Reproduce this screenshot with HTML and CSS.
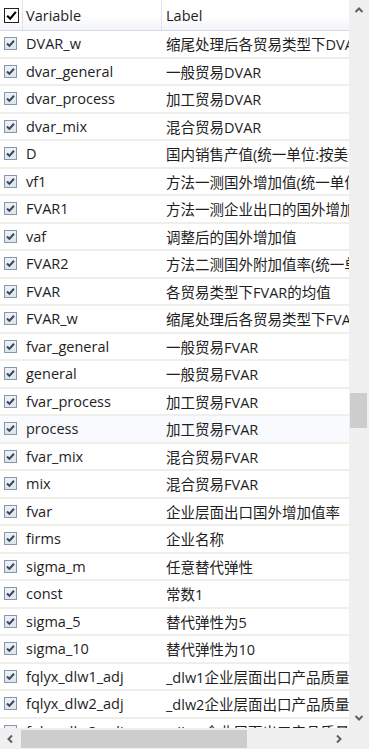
FILE: index.html
```html
<!DOCTYPE html>
<html lang="en">
<head>
  <meta charset="UTF-8" />
  <meta name="viewport" content="width=device-width, initial-scale=1.0"/>
  <title>Variables</title>
  <link rel="stylesheet" href="styles.css">
</head>
<body>

  <div class="frame">
    <div class="view">
      <div class="head">
        <div class="cell-check"><span class="box box-head"><svg viewBox="0 0 12 12"><path d="M2 6.2 L4.8 9 L10 2.6" fill="none" stroke="#000" stroke-width="2"/></svg></span></div>
        <div class="cell-var">Variable</div>
        <div class="cell-label">Label</div>
      </div>
      <div class="rows" id="rows"></div>
    </div>

    <div class="vscroll">
      <span class="arrow"><svg viewBox="0 0 10 10"><path d="M1.5 7 L5 3.5 L8.5 7" fill="none" stroke="#606060" stroke-width="2"/></svg></span>
      <div class="vtrack"><div class="vthumb"></div></div>
      <span class="arrow"><svg viewBox="0 0 10 10"><path d="M1.5 3 L5 6.5 L8.5 3" fill="none" stroke="#606060" stroke-width="2"/></svg></span>
    </div>

    <div class="hscroll">
      <span class="arrow"><svg viewBox="0 0 10 10"><path d="M7 1.5 L3.5 5 L7 8.5" fill="none" stroke="#606060" stroke-width="2"/></svg></span>
      <div class="htrack"><div class="hthumb"></div></div>
      <span class="arrow"><svg viewBox="0 0 10 10"><path d="M3 1.5 L6.5 5 L3 8.5" fill="none" stroke="#606060" stroke-width="2"/></svg></span>
    </div>

    <div class="corner"></div>
  </div>

  <script>
    const vars = [
      ['DVAR_w', '缩尾处理后各贸易类型下DVAR的均值'],
      ['dvar_general', '一般贸易DVAR'],
      ['dvar_process', '加工贸易DVAR'],
      ['dvar_mix', '混合贸易DVAR'],
      ['D', '国内销售产值(统一单位:按美元)'],
      ['vf1', '方法一测国外增加值(统一单位)'],
      ['FVAR1', '方法一测企业出口的国外增加值率'],
      ['vaf', '调整后的国外增加值'],
      ['FVAR2', '方法二测国外附加值率(统一单位)'],
      ['FVAR', '各贸易类型下FVAR的均值'],
      ['FVAR_w', '缩尾处理后各贸易类型下FVAR的均值'],
      ['fvar_general', '一般贸易FVAR'],
      ['general', '一般贸易FVAR'],
      ['fvar_process', '加工贸易FVAR'],
      ['process', '加工贸易FVAR'],
      ['fvar_mix', '混合贸易FVAR'],
      ['mix', '混合贸易FVAR'],
      ['fvar', '企业层面出口国外增加值率'],
      ['firms', '企业名称'],
      ['sigma_m', '任意替代弹性'],
      ['const', '常数1'],
      ['sigma_5', '替代弹性为5'],
      ['sigma_10', '替代弹性为10'],
      ['fqlyx_dlw1_adj', '_dlw1企业层面出口产品质量'],
      ['fqlyx_dlw2_adj', '_dlw2企业层面出口产品质量'],
      ['fqlyx_dlw3_adj', '_dlw3企业层面出口产品质量']
    ];

    const check = '<span class="box"><svg viewBox="0 0 12 12"><path d="M2.2 6 L4.8 8.6 L9.8 3" fill="none" stroke="#35475f" stroke-width="2.2"/></svg></span>';

    const rows = document.getElementById('rows');
    vars.forEach(function (v) {
      const row = document.createElement('div');
      row.className = 'row' + (v[0] === 'process' ? ' hover' : '');
      row.innerHTML = '<div class="cell-check">' + check + '</div>' +
        '<div class="cell-var">' + v[0] + '</div>' +
        '<div class="cell-label">' + v[1] + '</div>';
      rows.appendChild(row);
    });
  </script>

</body>
</html>
```

FILE: styles.css
```css
body {
  margin: 0;
  font-family: "Open Sans", "Noto Sans CJK SC", sans-serif;
  font-size: 14.5px;
  color: #1e1e1e;
  background: #ffffff;
}

.frame {
  width: 369px;
  height: 749px;
  display: grid;
  grid-template-columns: 349px 20px;
  grid-template-rows: 728px 21px;
  overflow: hidden;
}

.view {
  overflow: hidden;
  background: #ffffff;
}

.head,
.row {
  display: grid;
  grid-template-columns: 22px 139px 300px;
  width: 461px;
}

.head {
  height: 30px;
  background: linear-gradient(#ffffff, #ffffff 50%, #f3f4f7);
  border-bottom: 1px solid #d5d9e3;
  align-items: center;
}

.head .cell-var,
.head .cell-label {
  border-left: 1px solid #dde3ee;
  height: 100%;
  display: flex;
  align-items: center;
}

.head .cell-var {
  padding-left: 3px;
}

.head .cell-label {
  padding-left: 4px;
}

.row {
  height: 25.5px;
  border-bottom: 2px solid #efefea;
  align-items: center;
}

.row.hover {
  background: #f8fafd;
}

.cell-check {
  display: flex;
  align-items: center;
  padding-left: 4px;
}

.cell-var,
.cell-label {
  white-space: nowrap;
  overflow: hidden;
}

.row .cell-var {
  padding-left: 4px;
}

.row .cell-label {
  padding-left: 5px;
}

.box {
  width: 11px;
  height: 11px;
  border: 1px solid #8696ab;
  background: linear-gradient(#eef1f5, #dfe4ea);
  display: flex;
}

.box svg {
  width: 11px;
  height: 11px;
}

.box-head {
  width: 13px;
  height: 13px;
  border: 1px solid #222;
  background: #ffffff;
}

.box-head svg {
  width: 13px;
  height: 13px;
}

.vscroll {
  background: #f0f0f0;
  display: flex;
  flex-direction: column;
  align-items: center;
}

.vscroll .arrow {
  height: 20px;
  width: 20px;
  display: flex;
  align-items: center;
  justify-content: center;
}

.arrow svg {
  width: 10px;
  height: 10px;
}

.vtrack {
  flex: 1;
  width: 100%;
}

.vthumb {
  margin: 373px 2px 0 1px;
  height: 35px;
  background: #cdcdcd;
}

.hscroll {
  background: #f0f0f0;
  display: flex;
  align-items: center;
}

.hscroll .arrow {
  width: 20px;
  height: 21px;
  display: flex;
  align-items: center;
  justify-content: center;
}

.htrack {
  flex: 1;
  height: 100%;
  display: flex;
  align-items: center;
}

.hthumb {
  margin-left: 1px;
  width: 226px;
  height: 18px;
  background: #cdcdcd;
}

.corner {
  background: #f0f0f0;
}
```
